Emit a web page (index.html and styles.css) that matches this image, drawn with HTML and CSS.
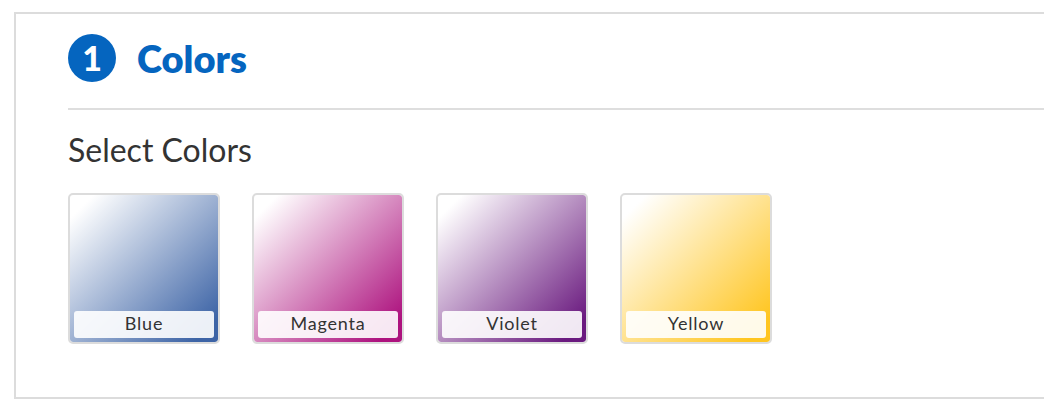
FILE: index.html
```html
<!DOCTYPE html>
<html lang="en">
<head>
<meta charset="utf-8">
<title>Colors</title>
<link rel="stylesheet" href="styles.css">
</head>
<body>
<section class="panel">
  <header class="step-header">
    <span class="step-num">1</span>
    <h2 class="step-title">Colors</h2>
  </header>
  <div class="divider"></div>
  <h3 class="sub-title">Select Colors</h3>
  <div class="swatches">
    <div class="swatch swatch-blue"><span class="swatch-label">Blue</span></div>
    <div class="swatch swatch-magenta"><span class="swatch-label">Magenta</span></div>
    <div class="swatch swatch-violet"><span class="swatch-label">Violet</span></div>
    <div class="swatch swatch-yellow"><span class="swatch-label">Yellow</span></div>
  </div>
</section>
</body>
</html>
```

FILE: styles.css
```css
html, body {
  margin: 0;
  padding: 0;
  background: #fff;
  overflow: hidden;
}

body {
  font-family: Lato, "Open Sans", sans-serif;
  color: #333;
  width: 1044px;
  height: 416px;
}

.panel {
  margin: 12px 0 0 14px;
  width: 1100px;
  height: 387px;
  box-sizing: border-box;
  border: 2px solid #dcdcdc;
  border-right: none;
  padding: 20px 0 0 52px;
}

.step-header {
  display: flex;
  align-items: center;
  height: 48px;
}

.step-num {
  width: 48px;
  height: 48px;
  border-radius: 50%;
  background: #0565bf;
  color: #fff;
  font-weight: 900;
  font-size: 34px;
  display: flex;
  align-items: center;
  justify-content: center;
  line-height: 1;
}

.step-title {
  margin: 0 0 0 21px;
  font-size: 38px;
  font-weight: 800;
  color: #0565bf;
  line-height: 1;
}

.divider {
  margin-top: 26px;
  height: 2px;
  background: #dedede;
}

.sub-title {
  margin: 22px 0 0 0;
  font-size: 32px;
  font-weight: 400;
  color: #333;
  line-height: 36px;
}

.swatches {
  display: flex;
  gap: 32px;
  margin-top: 25px;
}

.swatch {
  width: 152px;
  height: 151px;
  box-sizing: border-box;
  border: 2px solid #dcdcdc;
  border-radius: 5px;
  display: flex;
  align-items: flex-end;
  padding: 0 4px 4px 4px;
}

.swatch-blue { background: linear-gradient(135deg, #ffffff 8%, #3d64a6 92%) padding-box; }
.swatch-magenta { background: linear-gradient(135deg, #ffffff 8%, #ad127e 92%) padding-box; }
.swatch-violet { background: linear-gradient(135deg, #ffffff 8%, #6a1a7f 92%) padding-box; }
.swatch-yellow { background: linear-gradient(135deg, #ffffff 8%, #ffc51f 92%) padding-box; }

.swatch-label {
  flex: 1;
  height: 27px;
  box-sizing: border-box;
  padding-bottom: 3px;
  border-radius: 3px;
  background: rgba(255, 255, 255, 0.9);
  display: flex;
  align-items: center;
  justify-content: center;
  font-size: 18px;
  letter-spacing: 0.8px;
  color: #333;
}
```
